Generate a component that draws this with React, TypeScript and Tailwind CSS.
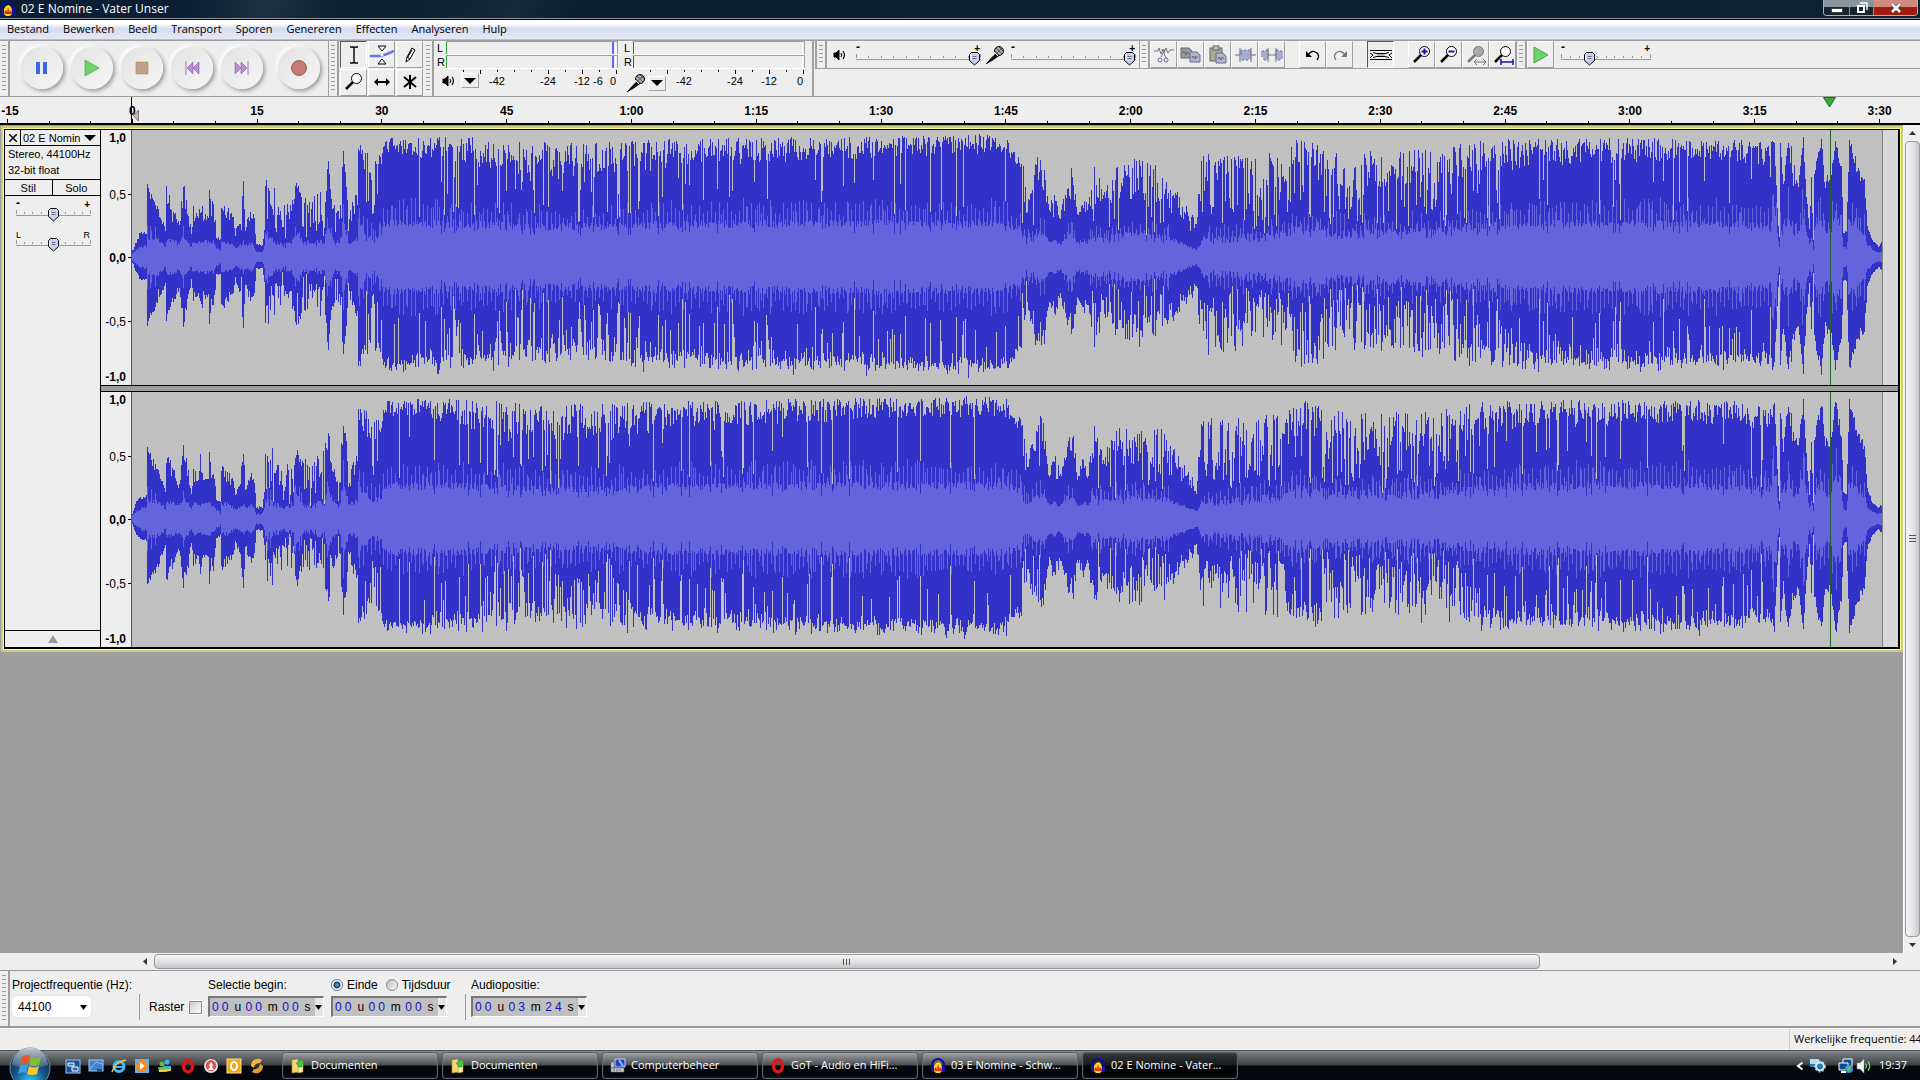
import React from "react";

/* ---------- waveform ---------- */

// [position, loud peak, quiet peak, rms level, chance of a dropout]
const ENVELOPE: number[][] = [
  [131, 0.03, 0.01, 0.02, 0], [136, 0.15, 0.1, 0.06, 0], [140, 0.2, 0.15, 0.08, 0], [146, 0.2, 0.17, 0.09, 0],
  [147, 0.58, 0.52, 0.15, 0], [153, 0.48, 0.36, 0.15, 0.05], [160, 0.36, 0.28, 0.13, 0], [165, 0.22, 0.2, 0.08, 0],
  [166, 0.58, 0.38, 0.13, 0], [171, 0.44, 0.28, 0.13, 0], [179, 0.3, 0.24, 0.11, 0], [183, 0.6, 0.4, 0.17, 0],
  [188, 0.4, 0.26, 0.12, 0], [191, 0.2, 0.18, 0.08, 0], [193, 0.42, 0.28, 0.12, 0], [198, 0.32, 0.28, 0.12, 0],
  [200, 0.57, 0.3, 0.12, 0], [203, 0.34, 0.27, 0.12, 0], [208, 0.34, 0.3, 0.13, 0], [209, 0.58, 0.5, 0.13, 0],
  [211, 0.34, 0.28, 0.12, 0], [213, 0.58, 0.3, 0.12, 0], [216, 0.16, 0.13, 0.07, 0], [220, 0.15, 0.13, 0.05, 0],
  [221, 0.43, 0.35, 0.12, 0], [227, 0.42, 0.28, 0.12, 0], [233, 0.32, 0.25, 0.09, 0], [235, 0.2, 0.15, 0.07, 0],
  [240, 0.36, 0.25, 0.1, 0.1], [243, 0.64, 0.5, 0.12, 0], [245, 0.26, 0.2, 0.09, 0], [251, 0.38, 0.3, 0.11, 0],
  [254, 0.32, 0.28, 0.08, 0], [256, 0.1, 0.08, 0.04, 0], [262, 0.1, 0.08, 0.04, 0], [264, 0.22, 0.15, 0.08, 0],
  [265, 0.62, 0.5, 0.18, 0.1], [274, 0.55, 0.3, 0.13, 0.5], [282, 0.45, 0.25, 0.11, 0.5], [290, 0.45, 0.25, 0.11, 0.45],
  [296, 0.6, 0.5, 0.18, 0], [303, 0.48, 0.3, 0.13, 0.45], [312, 0.48, 0.25, 0.12, 0.5], [324, 0.55, 0.3, 0.14, 0.35],
  [328, 0.76, 0.6, 0.25, 0], [331, 0.46, 0.38, 0.15, 0.1], [339, 0.38, 0.2, 0.12, 0.2], [343, 0.84, 0.7, 0.3, 0],
  [346, 0.62, 0.5, 0.18, 0], [348, 0.3, 0.2, 0.11, 0], [353, 0.48, 0.3, 0.13, 0.2], [357, 0.5, 0.4, 0.15, 0],
  [358, 0.9, 0.8, 0.28, 0], [365, 0.88, 0.6, 0.2, 0.25], [372, 0.75, 0.55, 0.16, 0.35], [381, 0.82, 0.7, 0.18, 0.1],
  [383, 0.94, 0.82, 0.27, 0.03], [430, 0.95, 0.76, 0.27, 0.07], [480, 0.94, 0.7, 0.26, 0.1], [515, 0.92, 0.62, 0.25, 0.2],
  [560, 0.9, 0.6, 0.24, 0.2], [620, 0.92, 0.64, 0.25, 0.12], [680, 0.93, 0.7, 0.26, 0.08], [760, 0.94, 0.74, 0.27, 0.07],
  [850, 0.95, 0.77, 0.27, 0.06], [980, 0.97, 0.8, 0.27, 0.05], [1006, 0.95, 0.8, 0.27, 0.05], [1014, 0.82, 0.72, 0.24, 0.05],
  [1020, 0.88, 0.7, 0.23, 0.1], [1023, 0.8, 0.35, 0.17, 0.2], [1026, 0.42, 0.35, 0.14, 0], [1031, 0.7, 0.5, 0.15, 0.1],
  [1038, 0.88, 0.55, 0.2, 0.1], [1043, 0.75, 0.5, 0.19, 0], [1048, 0.38, 0.28, 0.11, 0], [1053, 0.56, 0.32, 0.13, 0],
  [1059, 0.38, 0.28, 0.1, 0], [1066, 0.6, 0.4, 0.18, 0], [1071, 0.75, 0.45, 0.17, 0], [1076, 0.38, 0.3, 0.11, 0],
  [1082, 0.5, 0.35, 0.13, 0], [1086, 0.42, 0.3, 0.12, 0], [1093, 0.78, 0.5, 0.18, 0.05], [1102, 0.5, 0.38, 0.14, 0.15],
  [1112, 0.68, 0.42, 0.17, 0.12], [1125, 0.78, 0.45, 0.18, 0.15], [1140, 0.78, 0.38, 0.18, 0.2], [1157, 0.74, 0.34, 0.17, 0.2],
  [1168, 0.64, 0.32, 0.15, 0.1], [1180, 0.46, 0.25, 0.11, 0], [1190, 0.36, 0.2, 0.08, 0], [1195, 0.26, 0.18, 0.06, 0],
  [1198, 0.7, 0.4, 0.09, 0.3], [1200, 0.82, 0.6, 0.15, 0.5], [1230, 0.8, 0.58, 0.16, 0.5], [1260, 0.84, 0.55, 0.18, 0.45],
  [1285, 0.8, 0.52, 0.19, 0.4], [1290, 0.92, 0.65, 0.25, 0.14], [1316, 0.94, 0.65, 0.23, 0.2], [1330, 0.86, 0.55, 0.21, 0.38],
  [1400, 0.84, 0.55, 0.21, 0.36], [1450, 0.88, 0.58, 0.23, 0.28], [1480, 0.93, 0.65, 0.25, 0.15], [1560, 0.94, 0.72, 0.27, 0.09],
  [1660, 0.94, 0.75, 0.27, 0.07], [1740, 0.93, 0.74, 0.26, 0.09], [1768, 0.9, 0.65, 0.24, 0.1], [1773, 0.94, 0.88, 0.38, 0],
  [1776, 0.4, 0.35, 0.18, 0], [1778, 0.16, 0.14, 0.08, 0], [1779, 0.9, 0.82, 0.24, 0], [1782, 0.6, 0.5, 0.18, 0],
  [1787, 0.96, 0.85, 0.32, 0], [1791, 0.85, 0.55, 0.2, 0], [1796, 0.6, 0.48, 0.18, 0], [1802, 0.95, 0.88, 0.34, 0],
  [1805, 0.55, 0.45, 0.22, 0], [1808, 0.22, 0.18, 0.1, 0], [1810, 0.64, 0.55, 0.15, 0], [1812, 0.14, 0.12, 0.06, 0],
  [1813, 0.7, 0.6, 0.2, 0], [1820, 0.95, 0.85, 0.3, 0], [1824, 0.7, 0.5, 0.2, 0], [1829, 0.6, 0.55, 0.2, 0],
  [1834, 0.95, 0.88, 0.36, 0], [1840, 0.75, 0.6, 0.22, 0], [1842, 0.22, 0.18, 0.08, 0], [1845, 0.2, 0.18, 0.07, 0],
  [1848, 0.95, 0.88, 0.28, 0], [1854, 0.8, 0.65, 0.28, 0], [1859, 0.65, 0.55, 0.2, 0], [1863, 0.62, 0.55, 0.2, 0],
  [1866, 0.25, 0.22, 0.1, 0], [1871, 0.14, 0.12, 0.06, 0], [1877, 0.09, 0.08, 0.04, 0], [1882, 0.14, 0.11, 0.05, 0],
];

const START = 131;
const LENGTH = 1751;
const HALF = 127;

function randomSource(seed: number) {
  let s = seed;
  return () => {
    s = (Math.imul(s, 1664525) + 1013904223) >>> 0;
    return s / 4294967296;
  };
}

function buildWave(seed: number) {
  const rand = randomSource(seed);
  const topPeak: number[] = [];
  const bottomPeak: number[] = [];
  const rms: number[] = [];
  let k = 0;
  for (let i = 0; i < LENGTH; i++) {
    const x = START + i;
    while (k < ENVELOPE.length - 2 && ENVELOPE[k + 1][0] <= x) k++;
    const a = ENVELOPE[k];
    const b = ENVELOPE[k + 1];
    const t = Math.min(1, (x - a[0]) / (b[0] - a[0]));
    const at = (n: number) => a[n] + (b[n] - a[n]) * t;
    const shape = Math.pow(rand(), 0.8);
    let up = at(2) + (at(1) - at(2)) * shape;
    let down = (at(2) + (at(1) - at(2)) * (shape * 0.6 + rand() * 0.4)) * (0.92 + rand() * 0.08);
    let level = at(3) * (0.85 + rand() * 0.25);
    if (at(3) > 0.14 && (i % 4 === 0 || rand() < 0.08)) level *= 1.4 + rand() * 0.22;
    if (rand() < at(4)) {
      up *= 0.34 + rand() * 0.45;
      down *= 0.34 + rand() * 0.4;
      level *= 0.78;
    } else if (rand() < at(4) * 1.2) {
      down *= 0.55 + rand() * 0.35;
    }
    topPeak.push(Math.round(up * HALF));
    bottomPeak.push(Math.round(down * HALF));
    rms.push(Math.round(Math.min(level, up * 0.85) * HALF));
  }
  const outline = (up: number[], down: number[]) => {
    let d = "M0 " + HALF;
    for (let i = 0; i < LENGTH; i++) d += "V" + (HALF - up[i]) + "H" + (i + 1);
    for (let i = LENGTH - 1; i >= 0; i--) d += "V" + (HALF + down[i]) + "H" + i;
    return d + "Z";
  };
  return { peak: outline(topPeak, bottomPeak), rms: outline(rms, rms) };
}

const LEFT = buildWave(7321);
const RIGHT = buildWave(90417);

function Channel({ wave }: { wave: { peak: string; rms: string } }) {
  return (
    <div className="flex h-[255px] flex-1 bg-[#d7d7d7]">
      <svg viewBox="0 0 1766 255" preserveAspectRatio="none" className="h-full w-full" shapeRendering="crispEdges">
        <rect width="1751" height="255" fill="#c0c0c0" />
        <path d={wave.peak} fill="#3232c8" />
        <path d={wave.rms} fill="#6464dc" />
        <rect width="1" height="255" fill="#555" />
        <rect x="1750" width="1" height="255" fill="#808080" />
        <rect x="1698" width="1" height="255" fill="#22622c" />
      </svg>
    </div>
  );
}

function Scale() {
  const marks: [string, number, boolean][] = [["1,0", 12, true], ["0,5", 69, false], ["0,0", 132, true], ["-0,5", 196, false], ["-1,0", 251, true]];
  return (
    <svg width="30" height="255" className="shrink-0 bg-[#eee] font-['Liberation_Sans',sans-serif] text-[12px]">
      {marks.map(([label, y, bold]) => (
        <text key={label} x="25" y={y} textAnchor="end" fontWeight={bold ? 700 : 400}>{label}</text>
      ))}
      <path d="M27 64.5h4M27 127.5h4M27 191.5h4" stroke="#000" />
    </svg>
  );
}

/* ---------- small parts ---------- */

const Logo = () => (
  <svg width="16" height="16" viewBox="0 0 16 16" className="shrink-0">
    <path d="M2 12V7a6 6 0 0 1 12 0v5" fill="none" stroke="#0c0c9c" strokeWidth="2" />
    <path d="M1 8h3v6H2l-1-2zM15 8h-3v6h2l1-2z" fill="#1414b4" />
    <path d="M4 13V8l2-3 3-1 2 2 1 3v4l-2 2H6z" fill="#ffd820" />
    <path d="M4 11l2-2 1 2 1-5 1.500 5 1.500-2 1 2v2H5z" fill="#e8311c" />
  </svg>
);

function Grip({ tall }: { tall?: boolean }) {
  return (
    <div className={"flex w-[10px] shrink-0 items-center justify-center border-r-2 border-[#a0a0a0] " + (tall ? "self-stretch" : "h-[27px]")}>
      <div className={"w-1 bg-[repeating-linear-gradient(#999_0_1px,transparent_1px_4px)] " + (tall ? "h-[48px]" : "h-[20px]")} />
    </div>
  );
}

const Mic = () => (
  <svg width="20" height="20" viewBox="0 0 20 20" className="shrink-0">
    <path d="M1 19l4-5 6-6 3 3-7 5z" fill="#111" />
    <path d="M1 19l5-4" stroke="#000" />
    <circle cx="14" cy="6" r="4.500" fill="#aaa" stroke="#000" />
    <path d="M11 3l6 6M14 2l4 4M10 6l4 4M17 3l-6 6" stroke="#444" strokeWidth="0.800" />
    <path d="M9 7l4 4" stroke="#eee" />
  </svg>
);

const Speaker = () => (
  <svg width="14" height="14" viewBox="0 0 14 14" className="shrink-0" fill="none" stroke="#000">
    <path d="M1 5h2l3-3v10L3 9H1z" fill="#000" />
    <path d="M8 5q1.500 2 0 4M10 3q3 4 0 8" strokeWidth="1.200" />
  </svg>
);

function Slider({ label, width, value, low = "-", high = "+", ticks = 8 }: { label: string; width: number; value: number; low?: string; high?: string; ticks?: number }) {
  const thumb = 6 + ((width - 12) * value) / 100;
  const signs = low === "-";
  return (
    <div className="relative shrink-0" style={{ width }}>
      <svg width={width} height="27" className="block overflow-visible font-['Liberation_Sans',sans-serif] text-[9px]">
        {signs ? (
          <>
            <text x="0" y="10" fontSize="12" fontWeight="700">{low}</text>
            <text x={width - 1} y="11" fontSize="10" fontWeight="700" textAnchor="end">{high}</text>
          </>
        ) : (
          <>
            <text x="0" y="11">{low}</text>
            <text x={width - 1} y="11" textAnchor="end">{high}</text>
          </>
        )}
        {Array.from({ length: ticks + 2 }, (_, i) => (
          <rect key={i} x={Math.round((i * (width - 1)) / (ticks + 1))} y={i === 0 || i === ticks + 1 ? 13 : 15} width="1" height={i === 0 || i === ticks + 1 ? 4 : 2} fill="#999" />
        ))}
        <rect y="18" width={width} height="1" fill="#999" />
        <g transform={`translate(${Math.round(thumb) - 6} 11)`}>
          <path d="M2.500 .5h6l2 2v6l-5 4.500-5-4.500v-6z" fill="#cdcfee" stroke="#000" />
          <path d="M3.500 4.500h4M3.500 6.500h4" stroke="#6a6c98" />
          <path d="M2 3v5" stroke="#fff" />
        </g>
      </svg>
      <input type="range" aria-label={label} defaultValue={value} className="absolute inset-0 h-full w-full cursor-pointer opacity-0" />
    </div>
  );
}

function RoundButton({ label, children }: { label: string; children: React.ReactNode }) {
  return (
    <button aria-label={label} className="flex h-[42px] w-[42px] shrink-0 items-center justify-center rounded-full bg-linear-to-br from-[#e2e2e2] to-[#f6f6f6] shadow-[2px_2px_4px_#999,-2px_-2px_3px_#fff]">
      <svg width="18" height="18" viewBox="0 0 18 18">{children}</svg>
    </button>
  );
}

function Tool({ label, active, children }: { label: string; active?: boolean; children: React.ReactNode }) {
  return (
    <button
      aria-label={label}
      className={"flex h-[27px] w-[27px] shrink-0 items-center justify-center border " + (active ? "border-t-[#555] border-r-white border-b-white border-l-[#555]" : "border-t-white border-r-[#a0a0a0] border-b-[#a0a0a0] border-l-white")}
    >
      <svg width="24" height="20" viewBox="0 0 24 20" fill="none" stroke="#000">{children}</svg>
    </button>
  );
}

const Lens = ({ fill = "#fff", ink = "#000" }: { fill?: string; ink?: string }) => (
  <>
    <circle cx="14.500" cy="6.500" r="5" fill={fill} stroke={ink} />
    <path d="M11 10l-7 7" stroke={ink} strokeWidth="2.500" />
  </>
);

function Meter({ name, color, icon, labels, level }: { name: string; color: string; icon: React.ReactNode; labels: [string, number][]; level?: boolean }) {
  return (
    <div className="flex w-[187px] shrink-0 flex-col font-['Liberation_Sans',sans-serif]">
      {["L", "R"].map((side) => (
        <div key={side} className="flex h-[14px] items-center text-[11px] leading-3">
          <span className="w-[12px] pl-[3px]">{side}</span>
          <div className="flex h-[14px] w-[172px] justify-end border-t border-b border-t-[#a0a0a0] border-b-white">
            <div className="mr-auto w-px" style={{ background: color }} />
            {level && <div className="mr-px w-[2px] bg-[#6464ff]" />}
            <div className="w-[3px] border-x border-l-white border-r-[#a0a0a0]" />
          </div>
        </div>
      ))}
      <div className="relative h-[27px]">
        <svg width="187" height="27" className="block overflow-visible text-[11px]">
          {Array.from({ length: 10 }, (_, i) => (
            <rect key={i} x={29 + i * 17} y="1" width="1" height={[1, 5, 7, 9].includes(i) ? 4 : 2} fill="#000" />
          ))}
          {labels.map(([t, x]) => (
            <text key={t} x={x} y="16" textAnchor="middle">{t}</text>
          ))}
        </svg>
        <div className="absolute top-[4px] left-[5px] flex items-center gap-[2px]">
          <span className="flex w-[20px] justify-center">{icon}</span>
          <button aria-label={name} className="flex h-[15px] w-[18px] items-center justify-center border border-t-white border-r-[#a0a0a0] border-b-[#a0a0a0] border-l-white">
            <svg width="12" height="6"><path d="M0 0h12L6 6z" /></svg>
          </button>
        </div>
      </div>
    </div>
  );
}

function TimeBox({ name, parts }: { name: string; parts: string[] }) {
  const units = ["u", "m", "s"];
  return (
    <div className="flex h-[21px] w-[116px] items-center justify-between border border-t-2 border-l-2 border-t-[#777] border-r-white border-b-white border-l-[#777] bg-[#c0c0c0] pl-[2px] text-[12px]" role="group" aria-label={name}>
      {parts.map((p, i) => (
        <span key={i} className="flex items-baseline gap-[3px]">
          <span className="text-[#1010c0]">{p[0]}</span>
          <span className="text-[#1010c0]">{p[1]}</span>
          <span className="pl-[3px]">{units[i]}</span>
        </span>
      ))}
      <button aria-label={name + " format"} className="flex h-full w-[8px] items-center justify-center bg-[#e6e6e6]">
        <svg width="7" height="5"><path d="M0 0h7L3.500 5z" /></svg>
      </button>
    </div>
  );
}

/* ---------- page data ---------- */

const MENUS = ["Bestand", "Bewerken", "Beeld", "Transport", "Sporen", "Genereren", "Effecten", "Analyseren", "Hulp"];
const TIMES = ["-15", "0", "15", "30", "45", "1:00", "1:15", "1:30", "1:45", "2:00", "2:15", "2:30", "2:45", "3:00", "3:15", "3:30"];

const FolderIcon = () => (
  <svg width="16" height="16" viewBox="0 0 16 16">
    <path d="M2 2l6-1 1 13-7 1z" fill="#f5d873" stroke="#b98d2e" strokeWidth=".6" />
    <path d="M8 4l5-1v11l-5 1z" fill="#fbeeb0" stroke="#b98d2e" strokeWidth=".6" />
    <path d="M8 9V6H6l4-5 4 5h-2v3z" fill="#3ccf3a" stroke="#178c1a" strokeWidth=".5" />
  </svg>
);
const ComputerIcon = () => (
  <svg width="16" height="16" viewBox="0 0 16 16">
    <path d="M5 1h10v8H5z" fill="#2440d8" stroke="#d5d8e0" />
    <path d="M9 2l4 6" stroke="#8ec3ff" strokeWidth="2" />
    <path d="M1 4h3v6H1zM1 10h13v4H1z" fill="#c6cbd2" stroke="#6a6f78" strokeWidth=".6" />
    <path d="M3 12h9" stroke="#555" strokeDasharray="2 1" />
  </svg>
);
const OperaIcon = () => (
  <svg width="16" height="16" viewBox="0 0 16 16">
    <ellipse cx="8" cy="8" rx="4.500" ry="6" fill="none" stroke="#e01616" strokeWidth="3.400" />
  </svg>
);

const TASKS: { label: string; icon: React.ReactNode; active?: boolean }[] = [
  { label: "Documenten", icon: <FolderIcon /> },
  { label: "Documenten", icon: <FolderIcon /> },
  { label: "Computerbeheer", icon: <ComputerIcon /> },
  { label: "GoT - Audio en HiFi...", icon: <OperaIcon /> },
  { label: "03 E Nomine - Schw...", icon: <Logo /> },
  { label: "02 E Nomine - Vater...", icon: <Logo />, active: true },
];

const QUICK: [string, React.ReactNode][] = [
  ["Vensters wisselen", <><rect x="1" y="2" width="14" height="13" fill="#1b4f93" stroke="#9fc4ee" /><path d="M3 5h6v3H3zM7 9h6v4H7z" fill="#2b6cb8" stroke="#fff" /></>],
  ["Bureaublad", <><rect x="1" y="2" width="14" height="11" fill="#3f83cf" stroke="#a9cbee" /><path d="M2 11l6-7 6 2" fill="none" stroke="#8cc1f5" /><path d="M9 11h5v3H9z" fill="#234f88" /></>],
  ["Internet Explorer", <><circle cx="8" cy="8.500" r="5" fill="none" stroke="#49b8f5" strokeWidth="3" /><path d="M4 9h9" stroke="#49b8f5" strokeWidth="2" /><path d="M1 14Q4 4 15 2" fill="none" stroke="#f7c740" strokeWidth="1.400" /></>],
  ["Media Player", <><rect x="1" y="1" width="14" height="14" fill="#5bb4ee" /><circle cx="8" cy="8" r="6" fill="#f58a1d" /><path d="M6 4.500l5 3.500-5 3.500z" fill="#fff" /></>],
  ["Messenger", <><circle cx="10" cy="4" r="2.500" fill="#3fb0e8" /><circle cx="5" cy="6" r="2.500" fill="#63bd45" /><path d="M6 8h8v4H8z" fill="#3fb0e8" /><path d="M1 9h8l5 3-5 2H2z" fill="#63bd45" /><path d="M2 13l12-1" stroke="#f3cf52" strokeWidth="2" /></>],
  ["Opera", <ellipse key="o" cx="8" cy="8" rx="4.500" ry="6" fill="none" stroke="#e01616" strokeWidth="3.400" />],
  ["Nero", <><circle cx="8" cy="8" r="7" fill="#e4e4e8" /><path d="M8 2a6 6 0 0 1 5 8l-3 3H6l-3-3a6 6 0 0 1 5-8z" fill="#d6564c" /><path d="M8 4l2 3-1 2 2 3H5l2-3-1-2z" fill="#fff" /></>],
  ["Outlook", <><rect x="1" y="1" width="14" height="14" fill="#f0a818" stroke="#ffe08a" /><ellipse cx="8" cy="8" rx="3" ry="4" fill="none" stroke="#fff" strokeWidth="2" /></>],
  ["Winamp", <><path d="M13 2A7 7 0 0 0 2 8l3 2q1-5 6-5z" fill="#f0b440" /><path d="M3 14a7 7 0 0 0 11-6l-3-2q-1 5-6 5z" fill="#e0a030" /><circle cx="8" cy="8" r="2" fill="#333" /></>],
];

/* ---------- page ---------- */

export default function App() {
  return (
    <div className="flex h-screen w-full flex-col overflow-hidden bg-[#eee] font-['Liberation_Sans',sans-serif] text-[12px] text-black">
      {/* title bar */}
      <header className="flex h-[19px] shrink-0 items-center border-b border-[#8b949c] bg-[linear-gradient(115deg,#0b1e33_0_10%,#1c3142_14%,#0c2033_18%,#0d2132_22%,#152a3a_27%,#0b1f31_30%,#0e2232_100%)]">
        <Logo />
        <h1 className="ml-[5px] flex-1 font-['Open_Sans',sans-serif] text-[12px] leading-4 text-white">02 E Nomine - Vater Unser</h1>
        <div className="mr-[2px] flex h-[16px] self-start overflow-hidden rounded-b border border-t-0 border-[#a8b0b8]">
          <button aria-label="Minimaliseren" className="flex w-[26px] items-center justify-center border-r border-[#8b949c] bg-linear-to-b from-[#8a949c] from-45% to-[#16242e] to-50%">
            <svg width="12" height="12"><rect x=".5" y="6.500" width="11" height="4" fill="#fff" stroke="#444" /></svg>
          </button>
          <button aria-label="Herstellen" className="flex w-[24px] items-center justify-center border-r border-[#8b949c] bg-linear-to-b from-[#8a949c] from-45% to-[#16242e] to-50%">
            <svg width="12" height="12" fill="none" stroke="#fff" strokeWidth="2"><path d="M4 1h7v7" strokeWidth="1.500" /><rect x="2" y="4" width="6" height="6" /></svg>
          </button>
          <button aria-label="Sluiten" className="flex w-[43px] items-center justify-center bg-linear-to-b from-[#d08a80] from-45% to-[#a01c0c] to-50%">
            <svg width="12" height="10"><path d="M2 1l8 8M10 1L2 9" stroke="#444" strokeWidth="4" /><path d="M2 1l8 8M10 1L2 9" stroke="#fff" strokeWidth="2.500" /></svg>
          </button>
        </div>
      </header>

      {/* menu */}
      <nav className="flex h-[21px] shrink-0 items-center gap-[14px] border-t border-b border-t-black border-b-[#b8bccb] bg-linear-to-b from-white from-20% via-[#d6dcee] via-45% to-[#e4e7f6] pl-[7px] font-['Open_Sans',sans-serif] text-[11px]">
        {MENUS.map((m) => <button key={m}>{m}</button>)}
      </nav>

      {/* toolbars */}
      <section className="flex h-[57px] shrink-0 border-t border-b border-[#a0a0a0]">
        <Grip tall />
        <div className="flex w-[319px] shrink-0 items-center gap-2 border-r border-[#a0a0a0] pb-px pl-[11px]">
          <RoundButton label="Pauze"><path d="M3 3h4v12H3zM10 3h4v12h-4z" fill="#3c66e8" /></RoundButton>
          <RoundButton label="Afspelen"><path d="M2 1l14 8-14 8z" fill="#6cd46c" stroke="#4ba04b" strokeWidth=".7" /></RoundButton>
          <RoundButton label="Stop"><path d="M3 3h12v12H3z" fill="#bfa08c" stroke="#b0903c" strokeWidth=".6" /></RoundButton>
          <RoundButton label="Naar begin"><path d="M3 2v14" stroke="#a070c0" /><path d="M10 3v12L4 9zM16 3v12L10 9z" fill="#b98ad6" stroke="#8858a8" strokeWidth=".6" /></RoundButton>
          <RoundButton label="Naar einde"><path d="M15 2v14" stroke="#a070c0" /><path d="M2 3v12l6-6zM8 3v12l6-6z" fill="#b98ad6" stroke="#8858a8" strokeWidth=".6" /></RoundButton>
          <div className="ml-[7px]"><RoundButton label="Opnemen"><circle cx="9" cy="9" r="7.500" fill="#c47a78" stroke="#8b4a30" strokeWidth=".8" /></RoundButton></div>
        </div>
        <Grip tall />
        <div className="grid w-[85px] shrink-0 grid-cols-3 pl-px">
          <Tool label="Selectie" active><path d="M8 2h3l1 1 1-1h3M12 3v14M8 18h3l1-1 1 1h3" strokeWidth="1.400" /></Tool>
          <Tool label="Envelop"><path d="M8 1h8l-4 5zM8 19h8l-4-5z" fill="#fff" /><path d="M0 11h11l6-2 7-3" stroke="#6a74e0" strokeWidth="2.500" /><circle cx="12" cy="10" r="1.500" fill="#fff" stroke="none" /></Tool>
          <Tool label="Tekenen"><path d="M8 17l1-5 5-9 3 2-5 9zM9 12l3 2" fill="#fff" /><path d="M14 5l-4 7" /></Tool>
          <Tool label="Zoomen"><Lens /></Tool>
          <Tool label="Verschuiven"><path d="M5 10h14" strokeWidth="2" /><path d="M4 10l4-4v8zM20 10l-4-4v8z" fill="#000" stroke="none" /></Tool>
          <Tool label="Multifunctie"><path d="M12 3v14M6 5l12 10M18 5L6 15" strokeWidth="2" /></Tool>
        </div>
        <Grip tall />
        <div className="flex w-[380px] shrink-0 border-r-2 border-[#a0a0a0]">
          <Meter name="Afspeelmeter" color="#2fa32f" level icon={<Speaker />} labels={[["-42", 63], ["-24", 114], ["-12", 148], ["-6", 164], ["0", 179]]} />
          <Meter name="Opnamemeter" color="#a83232" icon={<Mic />} labels={[["-42", 63], ["-24", 114], ["-12", 148], ["0", 179]]} />
        </div>
        <div className="ml-px flex min-w-0 flex-1 flex-col">
          <div className="flex h-[28px] shrink-0 border-b border-l-2 border-[#a0a0a0]">
            <Grip />
            <div className="flex w-[313px] shrink-0 items-center border-r border-[#a0a0a0] pl-[6px]">
              <Speaker />
              <div className="ml-[9px]"><Slider label="Afspeelvolume" width={125} value={100} ticks={9} /></div>
              <div className="mr-[6px] ml-[4px]"><Mic /></div>
              <Slider label="Opnamevolume" width={125} value={100} ticks={9} />
            </div>
            <Grip />
            <div className="flex shrink-0 border-r border-[#a0a0a0]">
              <Tool label="Knippen"><g stroke="#777"><path d="M2 6h4l1-3 2 6 2-5 1 4 2-5 2 5 2-3h4" /><path d="M14 3l-5 9M10 4l4 9" /></g><circle cx="8" cy="15" r="2" stroke="#6468b0" /><circle cx="14" cy="15" r="2" stroke="#6468b0" /></Tool>
              <Tool label="Kopiëren"><path d="M2 3h8l3 3v7H2z" fill="#999" stroke="#666" /><path d="M11 7h7l3 3v7H11z" fill="#b4b4c8" stroke="#6468a0" /><path d="M4 8l1-2 2 4 1-3 2 2M13 13l1-2 2 3 1-3 2 2" stroke="#666" /></Tool>
              <Tool label="Plakken"><rect x="4" y="3" width="12" height="13" fill="#aaa890" stroke="#666" /><rect x="7" y="1" width="6" height="4" fill="#bbb" stroke="#666" /><path d="M10 8h7l3 3v7H10z" fill="#b4b4c8" stroke="#6468a0" /><path d="M12 14l1-2 2 3 1-3 2 2" stroke="#666" /></Tool>
              <Tool label="Trimmen"><path d="M2 10h5M18 10h5M7 3v14M18 3v14" stroke="#666" /><path d="M8 10V5h1v10h2V5h2v10h2V5h2v9" stroke="#6468b0" /></Tool>
              <Tool label="Stilte"><path d="M2 12V6h2v9h2V5h2v9M16 14V5h2v10h2V6h2v8" stroke="#6468b0" /><path d="M8 10h8M8 3v14M16 3v14" stroke="#777" /></Tool>
              <div className="w-[14px]" />
              <Tool label="Ongedaan maken"><path d="M7 10q4-6 9-2 3 3 0 7" strokeWidth="1.300" /><path d="M5 6v6h6z" fill="#000" stroke="none" /></Tool>
              <Tool label="Opnieuw"><path d="M17 10q-4-6-9-2-3 3 0 7" stroke="#777" strokeWidth="1.300" /><path d="M19 6v6h-6z" fill="#777" stroke="none" /></Tool>
              <div className="w-[14px]" />
              <Tool label="Sporen koppelen" active><path d="M1 5.500h22M1 14.500h22M1 8l3 2-3 3M23 8l-3 2 3 3M4 7.500l4 1h8l4-1M4 12.500l4-1h8l4 1" /><path d="M8 10h8" stroke="#777" /></Tool>
              <div className="w-[14px]" />
              <Tool label="Inzoomen"><Lens /><path d="M14.500 3.500v6M11.500 6.500h6" stroke="#1414a8" strokeWidth="2" /></Tool>
              <Tool label="Uitzoomen"><Lens /><path d="M11.500 6.500h6" stroke="#1414a8" strokeWidth="2" /></Tool>
              <Tool label="Selectie passend"><Lens fill="#aaa" ink="#777" /><path d="M10 17h12M13 14l-3 3 3 3M19 14l3 3-3 3" stroke="#777" /></Tool>
              <Tool label="Project passend"><Lens /><path d="M10 17h12M10 14v6M22 14v6" stroke="#1414a8" strokeWidth="1.500" /></Tool>
            </div>
            <Grip />
            <Tool label="Afspelen op snelheid"><path d="M5 2l14 8-14 8z" fill="#6cd46c" stroke="#4ba04b" /></Tool>
            <div className="ml-[7px]"><Slider label="Afspeelsnelheid" width={90} value={30} ticks={9} /></div>
          </div>
        </div>
      </section>

      {/* timeline */}
      <section className="relative h-[28px] shrink-0 overflow-hidden border-b-2 border-black bg-[#eee]">
        <div className="-mr-[22px] -ml-[55px] flex h-full">
          {TIMES.map((t, i) => (
            <div key={t} className="flex flex-1 flex-col">
              <span className={"flex-1 pt-[6px] text-center text-[12px] leading-4 font-bold " + (i === 0 ? "pl-[5px]" : "")}>{t}</span>
              <div className="grid h-[4px] grid-cols-3 items-end justify-items-center">
                <i className="h-[2px] w-px bg-black" />
                <i className="h-[4px] w-px bg-black" />
                <i className="h-[2px] w-px bg-black" />
              </div>
            </div>
          ))}
        </div>
        <svg className="absolute top-0 left-[131px]" width="9" height="26"><path d="M.5 0v26" stroke="#000" /><path d="M7.500 13v11l-5-5.500z" fill="#bbb" stroke="#777" /></svg>
        <svg className="absolute top-0 right-[84px]" width="13" height="11"><path d="M.5.5h12l-6 9.500z" fill="#38a838" stroke="#1c6c1c" /></svg>
      </section>

      {/* tracks and vertical scroll bar */}
      <main className="flex min-h-0 flex-1">
        <div className="flex min-w-0 flex-1 flex-col bg-[#9e9e9e] pt-px">
          <div className="ml-px flex border-2 border-[#cccc80]">
            <div className="flex flex-1 border border-[#ffff80]">
              <div className="flex flex-1 border border-r-2 border-b-2 border-black bg-[#9e9e9e]">
                <aside className="flex w-[96px] shrink-0 flex-col border-r border-black bg-[#eee] text-[11px]">
                  <div className="flex h-[16px] shrink-0 border-b border-black">
                    <button aria-label="Spoor sluiten" className="flex w-[16px] items-center justify-center border-r border-black">
                      <svg width="8" height="8"><path d="M0 0l8 8M8 0L0 8" stroke="#000" strokeWidth="1.500" /></svg>
                    </button>
                    <button className="flex flex-1 items-center justify-between pr-[4px] pl-[2px] text-[11px] leading-4 whitespace-nowrap">
                      02 E Nomin
                      <svg width="12" height="6"><path d="M0 0h12L6 6z" /></svg>
                    </button>
                  </div>
                  <p className="h-[34px] shrink-0 border-b border-black pl-[3px] leading-4 whitespace-nowrap">Stereo, 44100Hz<br />32-bit float</p>
                  <div className="grid h-[16px] shrink-0 grid-cols-2 border-b border-black text-center leading-[14px]">
                    <button className="border-r border-black">Stil</button>
                    <button>Solo</button>
                  </div>
                  <div className="flex flex-1 flex-col gap-[3px] pt-px pl-[11px]">
                    <Slider label="Versterking" width={75} value={50} />
                    <Slider label="Balans" width={75} value={50} low="L" high="R" />
                  </div>
                  <button aria-label="Spoor inklappen" className="flex h-[17px] shrink-0 items-center justify-center border-t border-black">
                    <svg width="10" height="8"><path d="M5 0l5 8H0z" fill="#999" /></svg>
                  </button>
                </aside>
                <div className="flex min-w-0 flex-1 flex-col">
                  <div className="flex border-b border-black"><Scale /><Channel wave={LEFT} /></div>
                  <div className="h-[5px]" />
                  <div className="flex border-t border-black"><Scale /><Channel wave={RIGHT} /></div>
                </div>
              </div>
            </div>
          </div>
        </div>
        <div className="flex w-[17px] shrink-0 flex-col items-center border-l border-white bg-[#f0f0f0]">
          <button aria-label="Omhoog" className="flex h-[16px] items-center"><svg width="7" height="4"><path d="M0 4h7L3.500 0z" fill="#333" /></svg></button>
          <div className="flex w-[15px] flex-1 items-center justify-center rounded-sm border border-[#999] bg-linear-to-r from-[#f6f6f6] via-[#e6e6ea] to-[#c8c8cc]">
            <div className="h-[8px] w-[7px] bg-[repeating-linear-gradient(#555_0_1px,transparent_1px_3px)]" />
          </div>
          <button aria-label="Omlaag" className="flex h-[16px] items-center"><svg width="7" height="4"><path d="M0 0h7L3.500 4z" fill="#333" /></svg></button>
        </div>
      </main>

      {/* horizontal scroll bar */}
      <div className="flex h-[17px] shrink-0 items-center pr-[17px] pl-[136px]">
        <button aria-label="Naar links" className="flex w-[18px] shrink-0 justify-center"><svg width="4" height="7"><path d="M4 0v7L0 3.500z" fill="#333" /></svg></button>
        <div className="flex flex-1">
          <div className="flex h-[15px] w-4/5 items-center justify-center rounded-sm border border-[#999] bg-linear-to-b from-[#f4f4f4] via-[#e4e4e8] to-[#c4c4c8]">
            <div className="h-[6px] w-[8px] bg-[repeating-linear-gradient(90deg,#555_0_1px,transparent_1px_3px)]" />
          </div>
        </div>
        <button aria-label="Naar rechts" className="flex w-[16px] shrink-0 justify-center"><svg width="4" height="7"><path d="M0 0v7l4-3.500z" fill="#333" /></svg></button>
      </div>

      {/* selection bar */}
      <section className="flex h-[58px] shrink-0 border-t border-b-2 border-[#999] text-[12px]">
        <Grip tall />
        <div className="flex w-[129px] shrink-0 flex-col gap-[3px] pt-[6px] pl-[2px]">
          <label htmlFor="rate" className="leading-4 whitespace-nowrap">Projectfrequentie (Hz):</label>
          <div className="relative w-[79px]">
            <select id="rate" className="h-[21px] w-full appearance-none rounded-sm bg-white pl-[6px] text-[12px] shadow-[0_0_1px_#aaa]"><option>44100</option></select>
            <svg width="7" height="5" className="pointer-events-none absolute top-[9px] right-[4px]"><path d="M0 0h7L3.500 5z" /></svg>
          </div>
        </div>
        <div className="mb-[6px] flex h-[26px] w-[69px] shrink-0 items-center justify-between self-end border-l border-[#999] pr-[6px] pl-[9px]">
          <label htmlFor="snap">Raster</label>
          <input id="snap" type="checkbox" className="h-[13px] w-[13px] appearance-none border border-[#888] bg-linear-to-br from-[#ccc] to-white outline outline-white" />
        </div>
        <div className="flex w-[123px] shrink-0 flex-col gap-[3px] pt-[6px]">
          <span className="leading-4">Selectie begin:</span>
          <TimeBox name="Selectie begin" parts={["00", "00", "00"]} />
        </div>
        <div className="flex w-[134px] shrink-0 flex-col gap-[3px] pt-[6px]">
          <div className="flex items-center gap-[8px] leading-4">
            <label className="flex items-center gap-[4px]"><input type="radio" name="mode" defaultChecked className="h-[12px] w-[12px] appearance-none rounded-full border border-[#777] bg-[radial-gradient(circle,#3a9ad0_0_1px,#123c60_3px,#fff_4px)]" />Einde</label>
            <label className="flex items-center gap-[4px]"><input type="radio" name="mode" className="h-[12px] w-[12px] appearance-none rounded-full border border-[#888] bg-linear-to-br from-[#bbb] to-white" />Tijdsduur</label>
          </div>
          <TimeBox name="Einde" parts={["00", "00", "00"]} />
        </div>
        <div className="mb-[6px] h-[26px] w-[6px] shrink-0 self-end border-l border-[#999]" />
        <div className="flex flex-col gap-[3px] pt-[6px]">
          <span className="leading-4">Audiopositie:</span>
          <TimeBox name="Audiopositie" parts={["00", "03", "24"]} />
        </div>
      </section>

      {/* status bar */}
      <footer className="flex h-[22px] shrink-0 items-center justify-end border-t border-white bg-[#f0eeec] font-['Open_Sans',sans-serif] text-[11px]">
        <div className="flex h-full w-[131px] items-center overflow-hidden border-l border-[#ccc] pl-[4px] whitespace-nowrap">Werkelijke frequentie: 44</div>
      </footer>

      {/* taskbar */}
      <nav className="flex h-[30px] shrink-0 items-center border-t border-[#555] bg-linear-to-b from-[#80868a] via-[#3c4042] via-48% to-[#04080e] to-52% font-['Open_Sans',sans-serif] text-[11px] text-white">
        <button aria-label="Start" className="-mt-[4px] ml-[9px] h-[34px] w-[42px] shrink-0 self-start overflow-hidden">
          <svg width="42" height="42" viewBox="0 0 42 42">
            <defs>
              <radialGradient id="orb" cx=".5" cy=".85" r=".8"><stop offset="0" stopColor="#35c8f0" /><stop offset=".5" stopColor="#16568c" /><stop offset="1" stopColor="#0d2338" /></radialGradient>
              <linearGradient id="shine" x2="0" y2="1"><stop offset="0" stopColor="#fff" stopOpacity=".75" /><stop offset="1" stopColor="#fff" stopOpacity=".15" /></linearGradient>
            </defs>
            <circle cx="21" cy="21" r="20" fill="url(#orb)" stroke="#6d8aa0" />
            <path d="M3 18a18 17 0 0 1 36 0q-18 6-36 0z" fill="url(#shine)" />
            <path d="M13 10q4-3 8-1l-2 8q-4-2-8 1z" fill="#e8572a" />
            <path d="M22 10q5 3 10 0l-2 8q-5 2-10 0z" fill="#7fbf2f" />
            <path d="M11 19q4-3 8-1l-2 8q-4-2-8 1z" fill="#3f9ee8" />
            <path d="M20 19q5 3 10 0l-2 8q-5 2-10 0z" fill="#fbc52c" />
          </svg>
        </button>
        <div className="ml-[14px] flex shrink-0 gap-[7px]">
          {QUICK.map(([name, art]) => (
            <button key={name} aria-label={name}><svg width="16" height="16" viewBox="0 0 16 16">{art}</svg></button>
          ))}
        </div>
        <div className="ml-[17px] flex min-w-0 flex-1 gap-[4px]">
          {TASKS.map((t, i) => (
            <button key={i} className={"flex h-[27px] w-[156px] items-center gap-[5px] rounded-[3px] border border-[#5c6064] pl-[7px] whitespace-nowrap shadow-[inset_0_0_1px_#aaa] " + (t.active ? "bg-linear-to-b from-[#33383b] via-[#191c1f] via-48% to-[#020406] to-52%" : "bg-linear-to-b from-[#a0a3a5] via-[#4c5052] via-48% to-[#04080d] to-52%")}>
              {t.icon}
              <span>{t.label}</span>
            </button>
          ))}
        </div>
        <div className="flex shrink-0 items-center pr-[13px]">
          <button aria-label="Verborgen pictogrammen"><svg width="8" height="10"><path d="M6.500 1.500L2 5l4.500 3.500" fill="none" stroke="#fff" strokeWidth="2" /></svg></button>
          <svg width="16" height="16" viewBox="0 0 16 16" className="ml-[6px]"><path d="M0 1h9v8H0z" fill="#b7dcef" /><path d="M0 6h9v3H0z" fill="#247fb8" /><circle cx="10" cy="8.500" r="4" fill="#1d7fb4" stroke="#dfe8ee" strokeWidth="2" /><circle cx="10" cy="8.500" r="5.500" fill="none" stroke="#dfe8ee" strokeDasharray="2 2" /></svg>
          <svg width="16" height="16" viewBox="0 0 16 16" className="ml-[12px]"><path d="M5 1h9v8H5z" fill="#0d4d96" stroke="#fff" /><path d="M1 5h9v7H1z" fill="#0d4d96" stroke="#fff" /><path d="M3 14h5" stroke="#fff" strokeWidth="2" /><circle cx="11" cy="11" r="4" fill="#3b8de0" /><path d="M9 9l3-1 1 3-2 3-2-2z" fill="#58c83c" /></svg>
          <svg width="16" height="16" viewBox="0 0 16 16" className="ml-[2px]" fill="none"><path d="M1 5h3l4-4v14l-4-4H1z" fill="#f2f2f2" stroke="#999" strokeWidth=".5" /><path d="M9.500 5.500q2 2.500 0 5M12 3.500q3.500 4.500 0 9" stroke="#6fd86f" strokeWidth="1.300" /></svg>
          <time className="ml-[7px]">19:37</time>
        </div>
      </nav>
    </div>
  );
}
